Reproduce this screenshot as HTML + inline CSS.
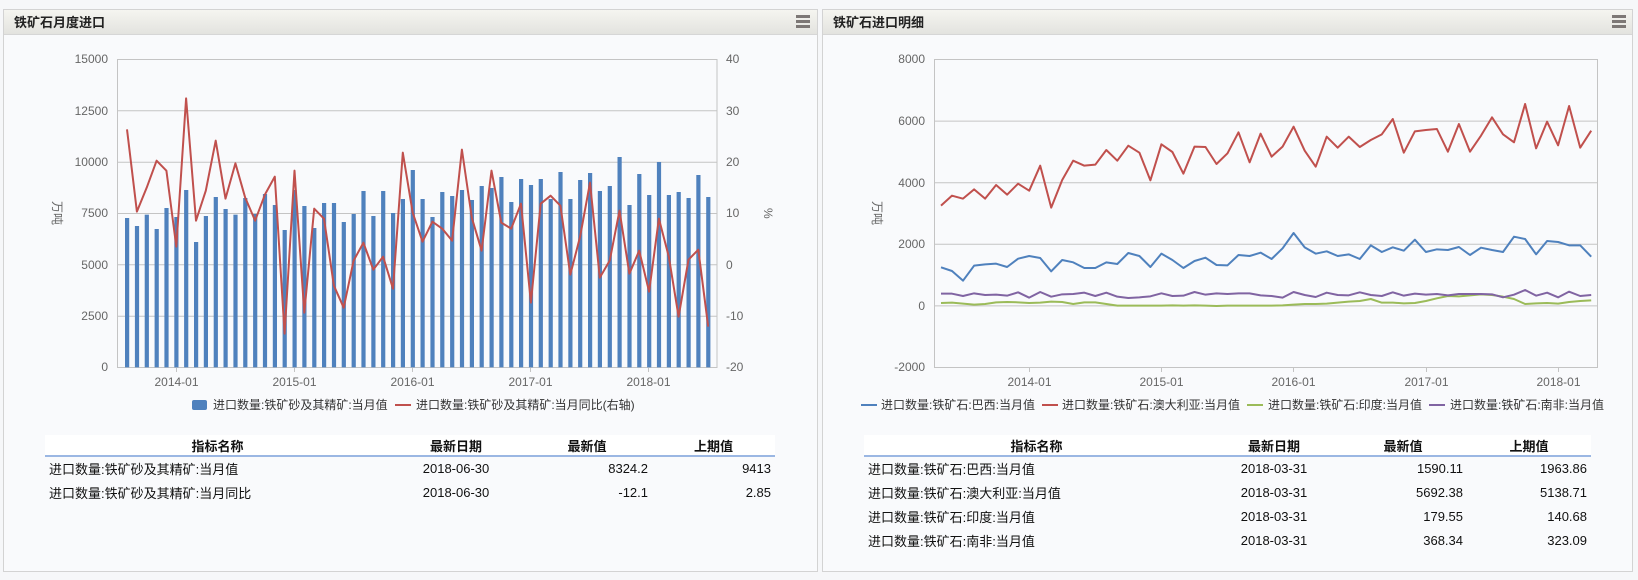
<!DOCTYPE html>
<html><head><meta charset="utf-8">
<style>
*{margin:0;padding:0;box-sizing:border-box}
body{width:1638px;height:580px;background:#f6f7f9;font-family:"Liberation Sans","Noto Sans CJK SC",sans-serif;position:relative;overflow:hidden;color:#222}
.panel{position:absolute;top:9px;height:563px;background:#f9fafc;border:1px solid #d3d3d3}
.hd{height:25px;background:linear-gradient(#f5f5f0,#e3e3df);border-bottom:1px solid #d6d6d6;font-weight:bold;font-size:13px;line-height:25px;padding-left:10px;color:#222}
.menu{position:absolute;top:5px;width:14px;height:13px;border-top:3px solid #7d7876;border-bottom:3px solid #7d7876}
.menu:after{content:"";position:absolute;left:0;right:0;top:2px;height:3px;background:#7d7876}
table{position:absolute;border-collapse:collapse;font-size:13px;color:#111}
th{background:#fff;height:21px;font-weight:bold;border-bottom:2px solid #9bb7e3;text-align:center}
td{height:24px;padding:0 4px}
svg{position:absolute;left:0;top:0}
</style></head><body>
<div class="panel" style="left:3px;width:815px"><div class="hd">铁矿石月度进口</div><div class="menu" style="left:792px"></div></div>
<div class="panel" style="left:822px;width:811px"><div class="hd">铁矿石进口明细</div><div class="menu" style="left:789px"></div></div>

<svg width="1638" height="580" font-family="Liberation Sans, Noto Sans CJK SC, sans-serif" font-size="12" fill="#666">
<!-- left grid -->
<g stroke="#c4c4c4" stroke-width="1" fill="none">
<rect x="117.5" y="59.5" width="599.5" height="308"/>
<line x1="117.5" y1="110.8" x2="717" y2="110.8"/><line x1="117.5" y1="162.2" x2="717" y2="162.2"/><line x1="117.5" y1="213.5" x2="717" y2="213.5"/><line x1="117.5" y1="264.8" x2="717" y2="264.8"/><line x1="117.5" y1="316.2" x2="717" y2="316.2"/>
<rect x="934.5" y="59.5" width="663" height="308"/>
<line x1="934.5" y1="121.1" x2="1597.5" y2="121.1"/><line x1="934.5" y1="182.7" x2="1597.5" y2="182.7"/><line x1="934.5" y1="244.3" x2="1597.5" y2="244.3"/><line x1="934.5" y1="305.9" x2="1597.5" y2="305.9"/>
<line x1="176.5" y1="367" x2="176.5" y2="372"/><line x1="294.5" y1="367" x2="294.5" y2="372"/><line x1="412.5" y1="367" x2="412.5" y2="372"/><line x1="530.5" y1="367" x2="530.5" y2="372"/><line x1="648.5" y1="367" x2="648.5" y2="372"/>
<line x1="1029.5" y1="367" x2="1029.5" y2="372"/><line x1="1161.5" y1="367" x2="1161.5" y2="372"/><line x1="1293.5" y1="367" x2="1293.5" y2="372"/><line x1="1426.5" y1="367" x2="1426.5" y2="372"/><line x1="1558.5" y1="367" x2="1558.5" y2="372"/>
</g>
<!-- left axis labels -->
<g text-anchor="end"><text x="108" y="63">15000</text><text x="108" y="115">12500</text><text x="108" y="166">10000</text><text x="108" y="217">7500</text><text x="108" y="269">5000</text><text x="108" y="320">2500</text><text x="108" y="371">0</text></g>
<g><text x="726" y="63">40</text><text x="726" y="115">30</text><text x="726" y="166">20</text><text x="726" y="217">10</text><text x="726" y="269">0</text><text x="726" y="320">-10</text><text x="726" y="371">-20</text></g>
<text x="0" y="0" transform="translate(53,201) rotate(90)">万吨</text>
<text x="0" y="0" transform="translate(764,208) rotate(90)">%</text>
<g text-anchor="middle"><text x="176.5" y="386">2014-01</text><text x="294.5" y="386">2015-01</text><text x="412.5" y="386">2016-01</text><text x="530.5" y="386">2017-01</text><text x="648.5" y="386">2018-01</text></g>
<!-- right axis labels -->
<g text-anchor="end"><text x="925" y="63">8000</text><text x="925" y="125">6000</text><text x="925" y="187">4000</text><text x="925" y="248">2000</text><text x="925" y="310">0</text><text x="925" y="371">-2000</text></g>
<text x="0" y="0" transform="translate(873,201) rotate(90)">万吨</text>
<g text-anchor="middle"><text x="1029.5" y="386">2014-01</text><text x="1161.5" y="386">2015-01</text><text x="1293.5" y="386">2016-01</text><text x="1426.5" y="386">2017-01</text><text x="1558.5" y="386">2018-01</text></g>

<!-- bars -->
<g transform="translate(0,40) scale(1,0.333333)" fill="#4f81bd">
<rect x="125.0" y="534" width="4.2" height="448"/><rect x="134.9" y="558" width="4.2" height="424"/><rect x="144.7" y="524" width="4.2" height="458"/><rect x="154.6" y="567" width="4.2" height="415"/><rect x="164.4" y="504" width="4.2" height="478"/><rect x="174.3" y="531" width="4.2" height="451"/><rect x="184.1" y="450" width="4.2" height="532"/><rect x="194.0" y="606" width="4.2" height="376"/><rect x="203.8" y="528" width="4.2" height="454"/><rect x="213.7" y="471" width="4.2" height="511"/>
<rect x="223.5" y="507" width="4.2" height="475"/><rect x="233.4" y="524" width="4.2" height="458"/><rect x="243.2" y="474" width="4.2" height="508"/><rect x="253.1" y="522" width="4.2" height="460"/><rect x="262.9" y="462" width="4.2" height="520"/><rect x="272.8" y="495" width="4.2" height="487"/><rect x="282.6" y="570" width="4.2" height="412"/><rect x="292.5" y="450" width="4.2" height="532"/><rect x="302.3" y="498" width="4.2" height="484"/><rect x="312.2" y="564" width="4.2" height="418"/>
<rect x="322.0" y="489" width="4.2" height="493"/><rect x="331.9" y="489" width="4.2" height="493"/><rect x="341.7" y="546" width="4.2" height="436"/><rect x="351.6" y="522" width="4.2" height="460"/><rect x="361.4" y="453" width="4.2" height="529"/><rect x="371.3" y="528" width="4.2" height="454"/><rect x="381.1" y="453" width="4.2" height="529"/><rect x="391.0" y="519" width="4.2" height="463"/><rect x="400.8" y="477" width="4.2" height="505"/><rect x="410.7" y="390" width="4.2" height="592"/>
<rect x="420.5" y="477" width="4.2" height="505"/><rect x="430.4" y="531" width="4.2" height="451"/><rect x="440.2" y="456" width="4.2" height="526"/><rect x="450.1" y="468" width="4.2" height="514"/><rect x="459.9" y="450" width="4.2" height="532"/><rect x="469.8" y="480" width="4.2" height="502"/><rect x="479.6" y="438" width="4.2" height="544"/><rect x="489.5" y="444" width="4.2" height="538"/><rect x="499.3" y="411" width="4.2" height="571"/><rect x="509.2" y="486" width="4.2" height="496"/>
<rect x="519.0" y="417" width="4.2" height="565"/><rect x="528.9" y="435" width="4.2" height="547"/><rect x="538.7" y="417" width="4.2" height="565"/><rect x="548.6" y="477" width="4.2" height="505"/><rect x="558.4" y="396" width="4.2" height="586"/><rect x="568.3" y="477" width="4.2" height="505"/><rect x="578.1" y="420" width="4.2" height="562"/><rect x="588.0" y="399" width="4.2" height="583"/><rect x="597.8" y="453" width="4.2" height="529"/><rect x="607.7" y="438" width="4.2" height="544"/>
<rect x="617.5" y="351" width="4.2" height="631"/><rect x="627.4" y="495" width="4.2" height="487"/><rect x="637.2" y="402" width="4.2" height="580"/><rect x="647.1" y="465" width="4.2" height="517"/><rect x="656.9" y="366" width="4.2" height="616"/><rect x="666.8" y="465" width="4.2" height="517"/><rect x="676.6" y="456" width="4.2" height="526"/><rect x="686.5" y="474" width="4.2" height="508"/><rect x="696.3" y="405" width="4.2" height="577"/><rect x="706.2" y="471" width="4.2" height="511"/>
</g>
<g transform="translate(0,40) scale(1,0.333333)" fill="none" stroke-width="2" stroke-linejoin="round">
<polyline vector-effect="non-scaling-stroke" stroke="#c0504d" points="127,268 136.9,515 146.7,443 156.6,362 166.4,392 176.3,620 186.1,175 196,542 205.8,452 215.7,302 225.5,476 235.4,370 245.2,473 255.1,542 264.9,464 274.8,410 284.6,881 294.5,392 304.3,818 314.2,506 324,536 333.9,737 343.7,803 353.6,662 363.4,608 373.3,689 383.1,650 393,746 402.8,338 412.7,518 422.5,605 432.4,545 442.2,566 452.1,602 461.9,329 471.8,533 481.6,632 491.5,392 501.3,548 511.2,566 521,491 530.9,788 540.7,491 550.6,467 560.4,497 570.3,704 580.1,590 590,428 599.8,713 609.7,662 619.5,512 629.4,701 639.2,632 649.1,755 658.9,536 668.8,650 678.6,830 688.5,659 698.3,629 708.2,860"/>
<polyline vector-effect="non-scaling-stroke" stroke="#c0504d" points="941,497 952,467 963,476 974.1,448 985.1,476 996.1,435 1007.1,464 1018.1,431 1029.2,452 1040.2,377 1051.2,503 1062.2,420 1073.2,362 1084.3,377 1095.3,374 1106.3,330 1117.3,362 1128.3,317 1139.4,338 1150.4,421 1161.4,313 1172.4,336 1183.4,401 1194.5,320 1205.5,321 1216.5,372 1227.5,340 1238.5,277 1249.6,367 1260.6,281 1271.6,350 1282.6,320 1293.6,260 1304.7,332 1315.7,380 1326.7,290 1337.7,323 1348.7,290 1359.8,321 1370.8,300 1381.8,283 1392.8,237 1403.8,338 1414.9,274 1425.9,270 1436.9,267 1447.9,335 1458.9,252 1470,335 1481,287 1492,232 1503,283 1514,307 1525.1,192 1536.1,325 1547.1,245 1558.1,316 1569.1,198 1580.2,323 1591.2,272"/>
<polyline vector-effect="non-scaling-stroke" stroke="#4f81bd" points="941,682 952,693 963,722 974.1,677 985.1,673 996.1,671 1007.1,681 1018.1,656 1029.2,648 1040.2,654 1051.2,694 1062.2,660 1073.2,667 1084.3,684 1095.3,684 1106.3,667 1117.3,672 1128.3,639 1139.4,648 1150.4,681 1161.4,641 1172.4,660 1183.4,684 1194.5,663 1205.5,653 1216.5,675 1227.5,676 1238.5,645 1249.6,648 1260.6,638 1271.6,657 1282.6,625 1293.6,579 1304.7,622 1315.7,641 1326.7,634 1337.7,648 1348.7,643 1359.8,657 1370.8,616 1381.8,636 1392.8,622 1403.8,632 1414.9,599 1425.9,636 1436.9,628 1447.9,630 1458.9,621 1470,645 1481,623 1492,630 1503,636 1514,590 1525.1,597 1536.1,643 1547.1,603 1558.1,606 1569.1,616 1580.2,616 1591.2,650"/>
<polyline vector-effect="non-scaling-stroke" stroke="#9bbb59" points="941,789 952,788 963,791 974.1,794 985.1,792 996.1,787 1007.1,786 1018.1,787 1029.2,789 1040.2,788 1051.2,785 1062.2,786 1073.2,792 1084.3,787 1095.3,787 1106.3,792 1117.3,797 1128.3,797 1139.4,797 1150.4,797 1161.4,797 1172.4,796 1183.4,797 1194.5,796 1205.5,797 1216.5,798 1227.5,797 1238.5,797 1249.6,797 1260.6,797 1271.6,797 1282.6,796 1293.6,794 1304.7,792 1315.7,792 1326.7,791 1337.7,788 1348.7,785 1359.8,783 1370.8,777 1381.8,788 1392.8,788 1403.8,790 1414.9,789 1425.9,783 1436.9,775 1447.9,768 1458.9,769 1470,766 1481,763 1492,765 1503,770 1514,777 1525.1,792 1536.1,790 1547.1,789 1558.1,791 1569.1,786 1580.2,783 1591.2,781"/>
<polyline vector-effect="non-scaling-stroke" stroke="#8064a2" points="941,761 952,761 963,768 974.1,760 985.1,765 996.1,764 1007.1,767 1018.1,757 1029.2,773 1040.2,756 1051.2,770 1062.2,763 1073.2,762 1084.3,758 1095.3,768 1106.3,758 1117.3,770 1128.3,774 1139.4,772 1150.4,769 1161.4,760 1172.4,768 1183.4,767 1194.5,756 1205.5,764 1216.5,760 1227.5,762 1238.5,760 1249.6,760 1260.6,766 1271.6,768 1282.6,773 1293.6,756 1304.7,765 1315.7,771 1326.7,758 1337.7,765 1348.7,766 1359.8,757 1370.8,765 1381.8,768 1392.8,757 1403.8,767 1414.9,761 1425.9,764 1436.9,762 1447.9,766 1458.9,762 1470,762 1481,762 1492,763 1503,772 1514,764 1525.1,750 1536.1,767 1547.1,758 1558.1,772 1569.1,755 1580.2,768 1591.2,765"/>
</g>
<!-- legends -->
<g font-size="12" fill="#333">
<rect x="192" y="400" width="15" height="10" rx="2" fill="#4f81bd"/><text x="213" y="409">进口数量:铁矿砂及其精矿:当月值</text>
<rect x="395" y="404" width="16" height="2" fill="#c0504d"/><text x="416" y="409">进口数量:铁矿砂及其精矿:当月同比(右轴)</text>
<rect x="861" y="404" width="16" height="2" fill="#4f81bd"/><text x="881" y="409">进口数量:铁矿石:巴西:当月值</text>
<rect x="1042" y="404" width="16" height="2" fill="#c0504d"/><text x="1062" y="409">进口数量:铁矿石:澳大利亚:当月值</text>
<rect x="1247" y="404" width="16" height="2" fill="#9bbb59"/><text x="1268" y="409">进口数量:铁矿石:印度:当月值</text>
<rect x="1429" y="404" width="16" height="2" fill="#8064a2"/><text x="1450" y="409">进口数量:铁矿石:南非:当月值</text>
</g>
</svg>

<table style="left:45px;top:435px;width:730px">
<tr><th style="width:345px">指标名称</th><th style="width:132px">最新日期</th><th style="width:130px">最新值</th><th>上期值</th></tr>
<tr><td>进口数量:铁矿砂及其精矿:当月值</td><td style="text-align:center">2018-06-30</td><td style="text-align:right">8324.2</td><td style="text-align:right">9413</td></tr>
<tr><td>进口数量:铁矿砂及其精矿:当月同比</td><td style="text-align:center">2018-06-30</td><td style="text-align:right">-12.1</td><td style="text-align:right">2.85</td></tr>
</table>
<table style="left:864px;top:435px;width:727px">
<tr><th style="width:345px">指标名称</th><th style="width:130px">最新日期</th><th style="width:128px">最新值</th><th>上期值</th></tr>
<tr><td>进口数量:铁矿石:巴西:当月值</td><td style="text-align:center">2018-03-31</td><td style="text-align:right">1590.11</td><td style="text-align:right">1963.86</td></tr>
<tr><td>进口数量:铁矿石:澳大利亚:当月值</td><td style="text-align:center">2018-03-31</td><td style="text-align:right">5692.38</td><td style="text-align:right">5138.71</td></tr>
<tr><td>进口数量:铁矿石:印度:当月值</td><td style="text-align:center">2018-03-31</td><td style="text-align:right">179.55</td><td style="text-align:right">140.68</td></tr>
<tr><td>进口数量:铁矿石:南非:当月值</td><td style="text-align:center">2018-03-31</td><td style="text-align:right">368.34</td><td style="text-align:right">323.09</td></tr>
</table>
</body></html>
